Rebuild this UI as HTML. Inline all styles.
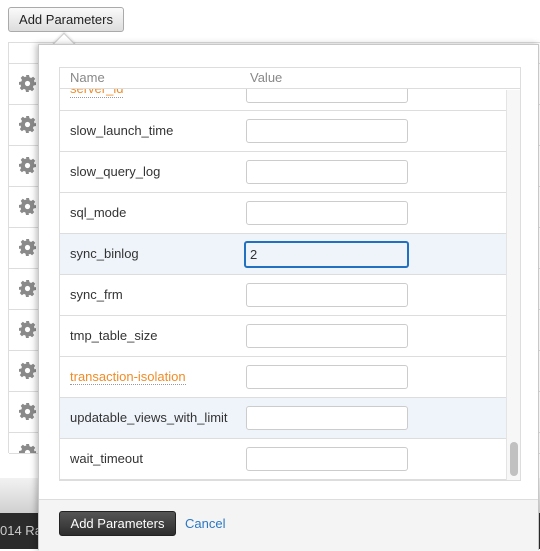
<!DOCTYPE html>
<html><head><style>
*{box-sizing:border-box;margin:0;padding:0}
body{width:540px;height:549px;overflow:hidden;position:relative;background:#fff;font-family:"Liberation Sans",Arial,sans-serif;font-size:13px;color:#333}
.topbtn{position:absolute;left:8px;top:7px;width:116px;height:25px;border:1px solid #aaa;border-radius:3px;background:linear-gradient(#fafafa,#ddd);font-size:13px;text-align:center;line-height:23px;color:#222}
.bgtable{position:absolute;left:8px;top:42px;width:540px;height:411px;border-left:1px solid #ddd;border-top:1px solid #ddd}
.bgrow{position:absolute;left:0;width:540px;border-top:1px solid #ddd}
.gear{position:absolute;left:10px;width:17px;height:17px}
.grad{position:absolute;left:0;top:478px;width:540px;height:35px;background:linear-gradient(#f2f2f2,#d0d0d0)}
.dark{position:absolute;left:0;top:513px;width:540px;height:36px;background:#2b2b2b;color:#ccc;font-size:13px;line-height:36px}
.pop{position:absolute;left:38px;top:44px;width:501px;height:506px;background:#fff;border:1px solid #c8c8c8;box-shadow:-2px 0 6px rgba(0,0,0,.25)}
.arrow{position:absolute;left:56px;top:36px;width:16px;height:16px;background:#fff;transform:rotate(45deg);border-left:1px solid #ccc;border-top:1px solid #ccc;box-shadow:-1px -1px 2px rgba(0,0,0,.1)}
.tbl{position:absolute;left:20px;top:22px;width:462px;height:414px;border:1px solid #ddd;overflow:hidden}
.hdr{position:absolute;left:0;top:0;width:460px;height:21px;border-bottom:1px solid #ddd;color:#888;font-size:13px;line-height:20px;background:#fff}
.row{position:absolute;left:0;width:446px;height:41px;border-bottom:1px solid #ddd;font-size:13px}
.row span{position:absolute;left:10px;top:12px}
.row i{position:absolute;left:186px;top:8px;width:162px;height:24px;border:1px solid #ccc;border-radius:3px;background:#fff}
.hl{background:#eff4fb}
.or{color:#f08c28;border-bottom:1px dotted #999}
.sb{position:absolute;left:446px;top:22px;width:14px;height:392px;background:#f7f7f7;border-left:1px solid #e4e4e4}
.thumb{position:absolute;left:3px;top:352px;width:8px;height:34px;border-radius:4px;background:#c1c1c1}
.foot{position:absolute;left:0;top:454px;width:499px;height:52px;background:#f4f4f4;border-top:1px solid #ddd}
.btn{position:absolute;left:20px;top:11px;width:117px;height:25px;border-radius:3px;background:linear-gradient(#555,#2d2d2d);border:1px solid #222;color:#fff;text-align:center;line-height:23px;font-size:13px}
.cancel{position:absolute;left:146px;top:16px;color:#2a78c4}
</style></head><body>
<svg width="0" height="0" style="position:absolute"><defs><g id="g"><path fill="#8a8a8a" d="M7 0h3l.5 2.3 1.6.7 2-1.3 2.1 2.1-1.3 2 .7 1.6L17 7v3l-2.4.5-.7 1.6 1.3 2-2.1 2.1-2-1.3-1.6.7L10 17H7l-.5-2.4-1.6-.7-2 1.3-2.1-2.1 1.3-2-.7-1.6L0 10V7l2.3-.5.7-1.6-1.3-2 2.1-2.1 2 1.3 1.6-.7z"/><circle cx="8.5" cy="8.5" r="2.6" fill="#fff"/></g></defs></svg>
<div class="topbtn">Add Parameters</div>
<div class="bgtable">
<div class="bgrow" style="top:20px"></div>
<svg class="gear" style="top:32px"><use href="#g"/></svg><div class="bgrow" style="top:61px"></div>
<svg class="gear" style="top:73px"><use href="#g"/></svg><div class="bgrow" style="top:102px"></div>
<svg class="gear" style="top:114px"><use href="#g"/></svg><div class="bgrow" style="top:143px"></div>
<svg class="gear" style="top:155px"><use href="#g"/></svg><div class="bgrow" style="top:184px"></div>
<svg class="gear" style="top:196px"><use href="#g"/></svg><div class="bgrow" style="top:225px"></div>
<svg class="gear" style="top:237px"><use href="#g"/></svg><div class="bgrow" style="top:266px"></div>
<svg class="gear" style="top:278px"><use href="#g"/></svg><div class="bgrow" style="top:307px"></div>
<svg class="gear" style="top:319px"><use href="#g"/></svg><div class="bgrow" style="top:348px"></div>
<svg class="gear" style="top:360px"><use href="#g"/></svg><div class="bgrow" style="top:389px"></div>
<svg class="gear" style="top:401px;height:9px"><use href="#g"/></svg>
<div class="bgrow" style="top:410px"></div>
</div>
<div class="grad"></div>
<div class="dark">014 Ra</div>
<div class="arrow"></div>
<div class="pop">
<div class="tbl">
<div class="row" style="top:0px;height:43px"><span class="or" style="top:18px;height:12px;overflow:hidden;line-height:6px">server_id</span><i style="top:18px;height:17px"></i></div>
<div class="hdr"><span style="position:absolute;left:10px">Name</span><span style="position:absolute;left:190px">Value</span></div>
<div class="row" style="top:43px"><span>slow_launch_time</span><i></i></div>
<div class="row" style="top:84px"><span>slow_query_log</span><i></i></div>
<div class="row" style="top:125px"><span>sql_mode</span><i></i></div>
<div class="row hl" style="top:166px"><span>sync_binlog</span><i style="border:2px solid #2270c0;background:#eff4fb;left:184px;top:7px;width:165px;height:27px"><b style="position:absolute;left:4px;top:4px;font-weight:normal;font-style:normal">2</b></i></div>
<div class="row" style="top:207px"><span>sync_frm</span><i></i></div>
<div class="row" style="top:248px"><span>tmp_table_size</span><i></i></div>
<div class="row" style="top:289px"><span class="or">transaction-isolation</span><i></i></div>
<div class="row hl" style="top:330px"><span>updatable_views_with_limit</span><i></i></div>
<div class="row" style="top:371px"><span>wait_timeout</span><i></i></div>
<div class="sb"><div class="thumb"></div></div>
</div>
<div class="foot"><div class="btn">Add Parameters</div><div class="cancel">Cancel</div></div>
</div>
</body></html>
